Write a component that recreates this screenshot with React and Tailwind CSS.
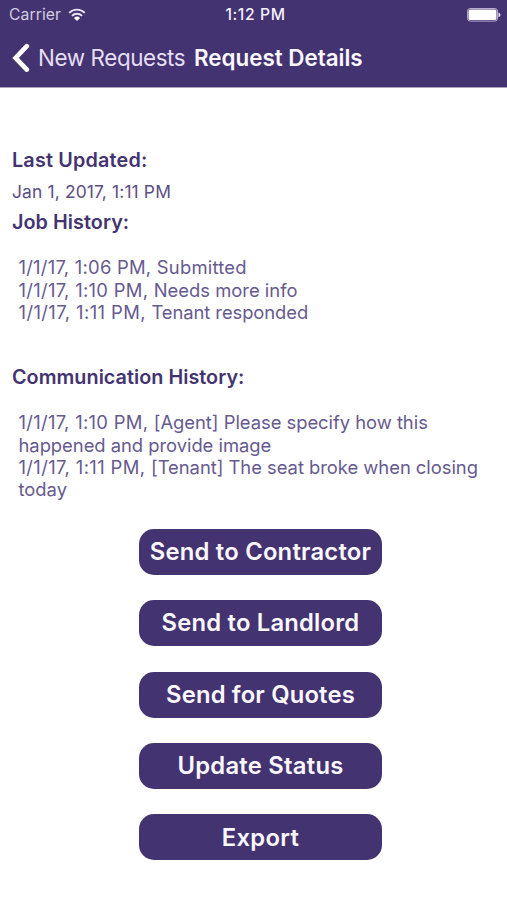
const jobHistory = [
  { time: '1/1/17, 1:06 PM,', timeSpacing: 'tracking-[0.25px]', text: 'Submitted', spacing: 'tracking-[0.22px]' },
  { time: '1/1/17, 1:10 PM,', timeSpacing: 'tracking-[0.3px]', text: 'Needs more info', spacing: 'tracking-[0px]' },
  { time: '1/1/17, 1:11 PM,', timeSpacing: 'tracking-[0.41px]', text: 'Tenant responded', spacing: 'tracking-[-0.08px]' },
];

const messages = [
  { time: '1/1/17, 1:10 PM,', timeSpacing: 'tracking-[0.3px]', text: '[Agent] Please specify how this', spacing: 'tracking-[-0.03px]' },
  { text: 'happened and provide image', spacing: 'tracking-[-0.03px]' },
  { time: '1/1/17, 1:11 PM,', timeSpacing: 'tracking-[0.38px]', text: '[Tenant] The seat broke when closing', spacing: 'tracking-[-0.03px]' },
  { text: 'today', spacing: 'tracking-[0px]' },
];

const actions = [
  { text: 'Send to Contractor', spacing: 'tracking-[0.22px]' },
  { text: 'Send to Landlord', spacing: 'tracking-[0.2px]' },
  { text: 'Send for Quotes', spacing: 'tracking-[0.17px]' },
  { text: 'Update Status', spacing: 'tracking-[0.26px]' },
  { text: 'Export', spacing: 'tracking-[0.3px]' },
];

function WifiIcon() {
  return (
    <svg width="18" height="14" viewBox="0 0 18 14" fill="none" stroke="#e9e3f4" strokeWidth="1.9">
      <path d="M1.2 4.9a11 11 0 0 1 15.6 0" />
      <path d="M3.9 7.8a7.2 7.2 0 0 1 10.2 0" />
      <path d="M9 13L5.9 9.9a4.4 4.4 0 0 1 6.2 0z" fill="#ffffff" stroke="none" />
    </svg>
  );
}

function Battery() {
  return (
    <svg width="34" height="14" viewBox="0 0 34 14">
      <rect x="0.5" y="0.5" width="30" height="12.6" rx="2.6" fill="#443371" stroke="#b5accc" />
      <rect x="1.5" y="1.5" width="28" height="10.6" rx="1.5" fill="#ffffff" />
      <path d="M31.5 4.4c2.6.8 2.6 4 0 4.8z" fill="#e9e3f4" />
    </svg>
  );
}

function Log({ lines }) {
  return (
    <div className="pl-[18.5px] text-[18.4px] leading-[22.4px] text-[#665a8f]">
      {lines.map((line) => (
        <p key={line.text}>
          {line.time && <span className={line.timeSpacing}>{line.time} </span>}
          <span className={line.spacing}>{line.text}</span>
        </p>
      ))}
    </div>
  );
}

export default function App() {
  return (
    <div className="flex h-[900px] w-[507px] flex-col overflow-hidden whitespace-nowrap bg-white font-['Inter','Liberation_Sans',sans-serif]">
      <header className="flex h-[88px] shrink-0 flex-col border-b border-[#aaa1bf] bg-[#443371]">
        <div className="grid h-[30px] grid-cols-3 items-center pl-[9px] pr-[6px] text-[15.7px]">
          <div className="flex items-center gap-[7px] text-[#d3cce2]">
            <span className="tracking-[0.1px]">Carrier</span>
            <WifiIcon />
          </div>
          <span className="pl-[1px] text-center font-medium tracking-[0.6px] text-[#f4f0fb]">1:12 PM</span>
          <div className="flex justify-end"><Battery /></div>
        </div>
        <div className="flex h-[56px] items-center pl-[11px]">
          <svg width="19" height="30" viewBox="0 0 19 30" fill="none" stroke="#ffffff" strokeWidth="4.7" strokeLinecap="round">
            <path d="M15.8 3.2L4.6 15l11.2 11.6" />
          </svg>
          <span className="ml-[8px] w-[156px] text-[22.4px] tracking-[-0.4px] text-[#e6def5]">New Requests</span>
          <h1 className="text-[22.4px] font-semibold text-[#fbf8ff]">Request Details</h1>
        </div>
      </header>
      <main className="flex flex-col text-[#443371]">
        <h2 className="mt-[58px] pl-[12px] text-[19.8px] font-semibold leading-[28px] tracking-[0.18px]">Last Updated:</h2>
        <p className="mt-[4px] pl-[12px] text-[17.4px] leading-[28px] tracking-[0.15px] text-[#5b4e84]">Jan 1, 2017, 1:11 PM</p>
        <h2 className="mt-[2px] pl-[12px] text-[19.8px] font-semibold leading-[28px] tracking-[0.05px]">Job History:</h2>
        <div className="mt-[20.3px]"><Log lines={jobHistory} /></div>
        <h2 className="mt-[39.7px] pl-[12px] text-[19.8px] font-semibold leading-[28px] tracking-[0.03px]">Communication History:</h2>
        <div className="mt-[20px]"><Log lines={messages} /></div>
        <div className="ml-[139px] mt-[28px] flex w-[243px] flex-col gap-[25.4px]">
          {actions.map((action) => (
            <button
              key={action.text}
              className="flex h-[46px] items-center justify-center rounded-[15px] bg-[#443371] text-[23.8px] font-semibold text-[#fbf8ff]"
            >
              <span className={action.spacing}>{action.text}</span>
            </button>
          ))}
        </div>
      </main>
    </div>
  );
}
